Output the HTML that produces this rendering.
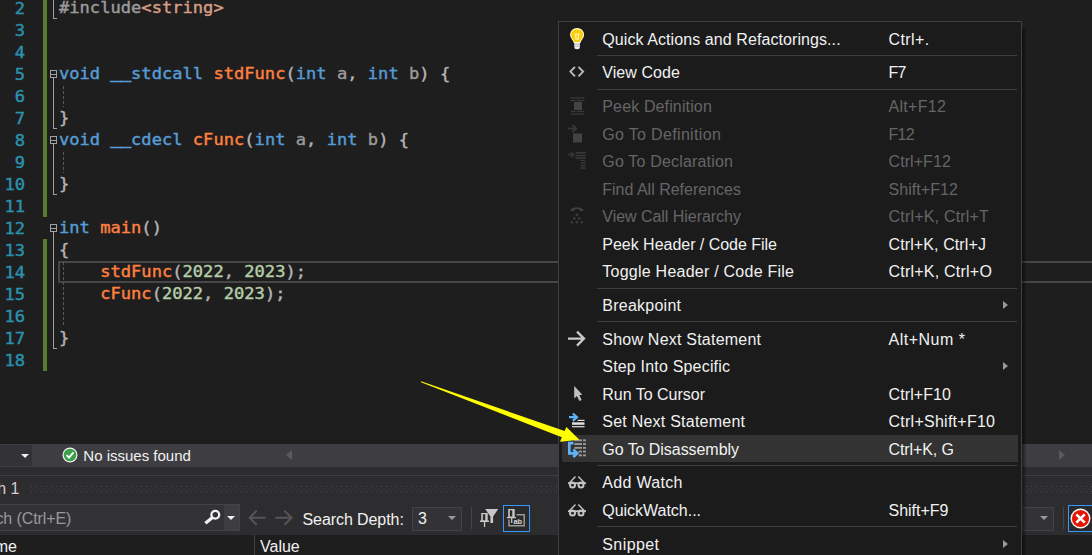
<!DOCTYPE html>
<html><head><meta charset="utf-8"><title>VS</title>
<style>
html,body{margin:0;padding:0;}
body{width:1092px;height:555px;overflow:hidden;background:#1e1e1e;position:relative;font-family:"Liberation Sans",sans-serif;}
.abs{position:absolute;}
#editor{position:absolute;left:0;top:0;width:1092px;height:444px;background:#1e1e1e;overflow:hidden;}
.ln{transform:scaleY(0.885);transform-origin:0 17px;position:absolute;left:0;width:25px;text-align:right;font:17.1px/22px "DejaVu Sans Mono","Liberation Mono",monospace;color:#2b91af;height:22px;-webkit-text-stroke:0.45px #2b91af;}
.cl{transform:scaleY(0.92);transform-origin:0 17px;position:absolute;left:59px;font:17.1px/22px "DejaVu Sans Mono","Liberation Mono",monospace;color:#dcdcdc;height:22px;white-space:pre;-webkit-text-stroke-width:0.45px;}
.k{color:#569cd6}.f{color:#ff8040}.s{color:#d69d85}.p{color:#9b9b9b}.n{color:#b5cea8}.v{color:#9a9a9a}.d{color:#b4b4b4}
.us{position:relative;top:-1.2px;-webkit-text-stroke-width:1.1px;}
.gb{position:absolute;left:43px;width:4px;background:#577b2f;}
#menu{position:absolute;left:558px;top:21px;width:462px;height:560px;background:#1b1b1c;border:1px solid #3f3f44;box-shadow:3px 8px 2px rgba(0,0,0,0.4);}
#menu>*{position:absolute;}
#menu .mi{margin-left:-559px;margin-top:-22px;font:16px/20px "Liberation Sans",sans-serif;color:#f1f1f1;white-space:pre;height:20px;}
#menu .mi.dis{color:#656565;}
#menu .sep{left:38px;width:420px;height:1px;background:#3d3d40;margin-top:-22px;}
#menu .hl{left:3px;width:456px;height:27px;background:#333334;margin-top:-22px;}
#menu .sub{left:443.5px;width:0;height:0;border-left:5px solid #999;border-top:4.5px solid transparent;border-bottom:4.5px solid transparent;margin-top:-22px;}
#bottom{position:absolute;left:0;top:444px;width:1092px;height:111px;background:#2d2d30;overflow:hidden;}
#bottom .st{font:16px/20px "Liberation Sans",sans-serif;color:#f1f1f1;white-space:pre;}
.tri-d{width:0;height:0;border-top:4px solid #999;border-left:4px solid transparent;border-right:4px solid transparent;}
.grip{background-image:radial-gradient(circle at 1px 1px,#3f3f44 0.7px,transparent 1.1px),radial-gradient(circle at 1px 1px,#3f3f44 0.7px,transparent 1.1px);background-size:4px 4px,4px 4px;background-position:0 0,2px 2px;}
</style></head><body>
<div id="editor">
<div class="gb" style="top:0;height:217px"></div>
<div class="gb" style="top:239px;height:132px"></div>
<div class="ln" style="top:-2.7px">2</div>
<div class="ln" style="top:19.3px">3</div>
<div class="ln" style="top:41.3px">4</div>
<div class="ln" style="top:63.3px">5</div>
<div class="ln" style="top:85.3px">6</div>
<div class="ln" style="top:107.3px">7</div>
<div class="ln" style="top:129.3px">8</div>
<div class="ln" style="top:151.3px">9</div>
<div class="ln" style="top:173.3px">10</div>
<div class="ln" style="top:195.3px">11</div>
<div class="ln" style="top:217.3px">12</div>
<div class="ln" style="top:239.3px">13</div>
<div class="ln" style="top:261.3px">14</div>
<div class="ln" style="top:283.3px">15</div>
<div class="ln" style="top:305.3px">16</div>
<div class="ln" style="top:327.3px">17</div>
<div class="ln" style="top:349.3px">18</div>
<div class="abs" style="left:58px;top:261px;width:1040px;height:18px;border:2px solid #464646;"></div>
<div class="cl" style="top:-4.45px"><span class="p">#include</span><span class="s">&lt;string&gt;</span></div>
<div class="cl" style="top:61.55px"><span class="k">void</span> <span class="k"><span class="us">__</span>stdcall</span> <span class="f">stdFunc</span><span class="d">(</span><span class="k">int</span> <span class="v">a</span><span class="d">,</span> <span class="k">int</span> <span class="v">b</span><span class="d">)</span> <span class="d">{</span></div>
<div class="cl" style="top:105.55px"><span class="d">}</span></div>
<div class="cl" style="top:127.55px"><span class="k">void</span> <span class="k"><span class="us">__</span>cdecl</span> <span class="f">cFunc</span><span class="d">(</span><span class="k">int</span> <span class="v">a</span><span class="d">,</span> <span class="k">int</span> <span class="v">b</span><span class="d">)</span> <span class="d">{</span></div>
<div class="cl" style="top:171.55px"><span class="d">}</span></div>
<div class="cl" style="top:215.55px"><span class="k">int</span> <span class="f">main</span><span class="d">()</span></div>
<div class="cl" style="top:237.55px"><span class="d">{</span></div>
<div class="cl" style="top:259.55px">    <span class="f">stdFunc</span><span class="d">(</span><span class="n">2022</span><span class="d">,</span> <span class="n">2023</span><span class="d">);</span></div>
<div class="cl" style="top:281.55px">    <span class="f">cFunc</span><span class="d">(</span><span class="n">2022</span><span class="d">,</span> <span class="n">2023</span><span class="d">);</span></div>
<div class="cl" style="top:325.55px"><span class="d">}</span></div>
<svg class="abs" style="left:0;top:0" width="120" height="444" viewBox="0 0 120 444" shape-rendering="crispEdges">
  <g stroke="#a0a0a0" stroke-width="1" fill="none">
    <!-- line 2 end of region -->
    <path d="M53.5 0 V18.5 H57"/>
    <!-- fold 5..7 -->
    <rect x="50.5" y="70.5" width="6" height="7" fill="#1e1e1e"/><path d="M51 74.5 H56"/>
    <path d="M53.5 78 V128.5 H57"/>
    <!-- fold 8..10 -->
    <rect x="50.5" y="136.5" width="6" height="7" fill="#1e1e1e"/><path d="M51 140.5 H56"/>
    <path d="M53.5 144 V194.5 H57"/>
    <!-- fold 12..17 -->
    <rect x="50.5" y="224.5" width="6" height="7" fill="#1e1e1e"/><path d="M51 228.5 H56"/>
    <path d="M53.5 232 V348.5 H57"/>
  </g>
  <g stroke="#5a5a5a" stroke-width="1" stroke-dasharray="3 2" fill="none">
    <path d="M63.5 86 V107"/>
    <path d="M63.5 152 V173"/>
    <path d="M63.5 262 V327"/>
  </g>
</svg>

</div>
<div id="bottom">
  <!-- status strip -->
  <div class="abs" style="left:0;top:0;width:1092px;height:23px;background:#3e3e42;"></div>
  <div class="abs" style="left:0;top:1px;width:32px;height:21px;background:#333337;"></div>
  <div class="abs tri-d" style="left:21px;top:10px;border-top-color:#f1f1f1;"></div>
  <svg class="abs" style="left:62px;top:3px" width="16" height="16" viewBox="0 0 17 17"><circle cx="8.5" cy="8.5" r="8" fill="#f5f5f5"/><circle cx="8.5" cy="8.5" r="6.7" fill="#3aa04a"/><path d="M4.8 8.7 L7.4 11.2 L12.2 5.6" fill="none" stroke="#fff" stroke-width="2"/></svg>
  <div class="abs st" style="left:83.3px;top:2px;font-size:15px;">No issues found</div>
  <div class="abs" style="left:286px;top:6px;width:0;height:0;border-right:6px solid #5a5a5e;border-top:5px solid transparent;border-bottom:5px solid transparent;"></div>
  <div class="abs" style="left:1059px;top:6px;width:0;height:0;border-left:6px solid #5a5a5e;border-top:5px solid transparent;border-bottom:5px solid transparent;"></div>
  <!-- gap + line -->
  <div class="abs" style="left:0;top:31px;width:1092px;height:1px;background:#3f3f46;"></div>
  <!-- title row -->
  <div class="abs st" style="left:-2.8px;top:35px;color:#d0d0d0;">h 1</div>
  <svg class="abs" style="left:31px;top:42px" width="1061" height="6"><defs><pattern id="gp" width="5" height="5" patternUnits="userSpaceOnUse"><rect x="0" y="0" width="1" height="1" fill="#48484d"/><rect x="2.5" y="2.6" width="1" height="1" fill="#404045"/></pattern></defs><rect width="1061" height="6" fill="url(#gp)"/></svg>
  <!-- search box -->
  <div class="abs" style="left:-5px;top:60px;width:243px;height:25px;background:#333337;border:1px solid #434346;"></div>
  <div class="abs" style="left:224px;top:61px;width:15px;height:25px;background:#3e3e42;"></div>
  <div class="abs st" style="left:-4.6px;top:65px;color:#999;letter-spacing:-0.1px">ch (Ctrl+E)</div>
  <svg class="abs" style="left:200px;top:60px" width="24" height="28" viewBox="0 0 24 28"><circle cx="15.3" cy="10.8" r="3.9" fill="none" stroke="#f1f1f1" stroke-width="2.3"/><path d="M12.5 13.4 L5.4 19.2" stroke="#f1f1f1" stroke-width="3.2" fill="none"/></svg>
  <div class="abs tri-d" style="left:227px;top:72px;border-top-color:#f1f1f1;"></div>
  <!-- nav arrows -->
  <svg class="abs" style="left:247px;top:60px" width="48" height="28" viewBox="0 0 48 28"><g fill="none" stroke="#555558" stroke-width="2"><path d="M18.7 13.8 H3 M9.8 6.6 L2.6 13.8 L9.8 21"/><path d="M28.2 13.8 H44 M37.4 6.6 L44.6 13.8 L37.4 21"/></g></svg>
  <div class="abs st" id="sd" style="left:302.5px;top:66px;letter-spacing:-0.08px;color:#f1f1f1;">Search Depth:</div>
  <div class="abs" style="left:412px;top:63px;width:48px;height:22px;background:#333337;border:1px solid #434346;"></div>
  <div class="abs st" style="left:418px;top:65px;color:#f1f1f1;">3</div>
  <div class="abs tri-d" style="left:448px;top:72px;border-top-color:#999;"></div>
  <div class="abs" style="left:471px;top:63px;width:1px;height:22px;background:#46464a;"></div>
  <div class="abs" style="left:503px;top:61px;width:25px;height:25px;border:1px solid #3399ff;background:#2a2a2c;"></div>
  <svg class="abs" style="left:478px;top:60px" width="52" height="30" viewBox="478 504 52 30">
    <g fill="#c8c8c8">
      <path d="M481.2 513 H487.7 V520.6 H489 V522 H485.2 V527 H483.9 V522 H480 V520.6 H481.2 Z M482.8 514.2 V520.2 H485.3 V514.2 Z" fill-rule="evenodd"/>
      <path d="M485.2 509.1 H498.2 L493.1 516.4 V523 H490.4 V516.4 Z"/>
      <path d="M508.2 509 H514.7 V516.9 H516 V518.3 H512.3 V523 H511.1 V518.3 H506.9 V516.9 H508.2 Z M509.8 510.2 V516.5 H512.3 V510.2 Z" fill-rule="evenodd"/>
    </g>
    <path d="M516.5 514.8 H524.2 V525.8 H509 V519.5" fill="none" stroke="#999" stroke-width="1.5"/>
    <text x="513.4" y="523.6" font-family="Liberation Sans, sans-serif" font-size="7.6" font-weight="bold" fill="#d8d8d8">ab</text>
  </svg>
  <!-- right side (behind/after menu) -->
  <div class="abs" style="left:1000px;top:63px;width:52px;height:22px;background:#333337;border:1px solid #434346;"></div>
  <div class="abs tri-d" style="left:1040px;top:72px;border-top-color:#999;"></div>
  <div class="abs" style="left:1063px;top:63px;width:1px;height:22px;background:#46464a;"></div>
  <div class="abs" style="left:1068px;top:61px;width:30px;height:25px;border:1px solid #3399ff;background:#2a2a2c;"></div>
  <svg class="abs" style="left:1070px;top:64px" width="21" height="21" viewBox="0 0 21 21"><circle cx="10.5" cy="10.5" r="10" fill="#f5f5f5"/><circle cx="10.5" cy="10.5" r="8.6" fill="#e51400"/><path d="M6.3 6.3 L14.7 14.7 M14.7 6.3 L6.3 14.7" stroke="#fff" stroke-width="2.6" fill="none"/></svg>
  <!-- grid header -->
  <div class="abs" style="left:0;top:91px;width:1092px;height:20px;background:#1e1e1e;"></div>
  <div class="abs" style="left:254px;top:91px;width:1px;height:20px;background:#3f3f46;"></div>
  <div class="abs st" style="left:-5.3px;top:93px;color:#f1f1f1;">me</div>
  <div class="abs st" style="left:260px;top:93px;color:#f1f1f1;">Value</div>
</div>

<div id="menu">
<div class="hl" style="top:435px"></div>
<div class="sep" style="top:55px"></div>
<div class="sep" style="top:89px"></div>
<div class="sep" style="top:288px"></div>
<div class="sep" style="top:321px"></div>
<div class="sep" style="top:465px"></div>
<div class="sep" style="top:526px"></div>
<div class="mi" style="left:602.3px;top:29.71px;letter-spacing:0.082px">Quick Actions and Refactorings...</div>
<div class="mi" style="left:888.5px;top:29.71px;letter-spacing:0.426px">Ctrl+.</div>
<div class="mi" style="left:602.3px;top:62.71px;letter-spacing:0.051px">View Code</div>
<div class="mi" style="left:888.5px;top:62.71px;letter-spacing:-0.700px">F7</div>
<div class="mi dis" style="left:602.3px;top:96.71px;letter-spacing:0.134px">Peek Definition</div>
<div class="mi dis" style="left:888.5px;top:96.71px;letter-spacing:0.284px">Alt+F12</div>
<div class="mi dis" style="left:602.3px;top:124.71px;letter-spacing:0.330px">Go To Definition</div>
<div class="mi dis" style="left:888.5px;top:124.71px;letter-spacing:-0.700px">F12</div>
<div class="mi dis" style="left:602.3px;top:151.71px;letter-spacing:0.176px">Go To Declaration</div>
<div class="mi dis" style="left:888.5px;top:151.71px;letter-spacing:0.072px">Ctrl+F12</div>
<div class="mi dis" style="left:602.3px;top:179.71px;letter-spacing:-0.007px">Find All References</div>
<div class="mi dis" style="left:888.5px;top:179.71px;letter-spacing:0.045px">Shift+F12</div>
<div class="mi dis" style="left:602.3px;top:206.71px;letter-spacing:-0.040px">View Call Hierarchy</div>
<div class="mi dis" style="left:888.5px;top:206.71px;letter-spacing:0.200px">Ctrl+K, Ctrl+T</div>
<div class="mi" style="left:602.3px;top:234.71px;letter-spacing:-0.023px">Peek Header / Code File</div>
<div class="mi" style="left:888.5px;top:234.71px;letter-spacing:0.106px">Ctrl+K, Ctrl+J</div>
<div class="mi" style="left:602.3px;top:261.71px;letter-spacing:0.242px">Toggle Header / Code File</div>
<div class="mi" style="left:888.5px;top:261.71px;letter-spacing:0.225px">Ctrl+K, Ctrl+O</div>
<div class="mi" style="left:602.3px;top:295.71px;letter-spacing:0.244px">Breakpoint</div>
<div class="sub" style="top:301.0px"></div>
<div class="mi" style="left:602.3px;top:329.71px;letter-spacing:0.219px">Show Next Statement</div>
<div class="mi" style="left:888.5px;top:329.71px;letter-spacing:0.504px">Alt+Num *</div>
<div class="mi" style="left:602.3px;top:356.71px;letter-spacing:0.187px">Step Into Specific</div>
<div class="sub" style="top:362.0px"></div>
<div class="mi" style="left:602.3px;top:384.71px;letter-spacing:-0.013px">Run To Cursor</div>
<div class="mi" style="left:888.5px;top:384.71px;letter-spacing:0.100px">Ctrl+F10</div>
<div class="mi" style="left:602.3px;top:411.71px;letter-spacing:0.233px">Set Next Statement</div>
<div class="mi" style="left:888.5px;top:411.71px;letter-spacing:0.257px">Ctrl+Shift+F10</div>
<div class="mi" style="left:602.3px;top:439.71px;letter-spacing:-0.052px">Go To Disassembly</div>
<div class="mi" style="left:888.5px;top:439.71px;letter-spacing:-0.092px">Ctrl+K, G</div>
<div class="mi" style="left:602.3px;top:472.71px;letter-spacing:0.316px">Add Watch</div>
<div class="mi" style="left:602.3px;top:500.71px;letter-spacing:-0.024px">QuickWatch...</div>
<div class="mi" style="left:888.5px;top:500.71px;letter-spacing:-0.004px">Shift+F9</div>
<div class="mi" style="left:602.3px;top:534.71px;letter-spacing:0.406px">Snippet</div>
<div class="sub" style="top:540.0px"></div>

</div>
<svg id="icons" class="abs" style="left:0;top:0" width="1092" height="555" viewBox="0 0 1092 555">
  <!-- lightbulb -->
  <g>
    <path d="M577.1 28.6 C573.2 28.6 570.6 31.5 570.6 34.8 C570.6 37.6 572.6 39.2 573.6 41 L574.3 42.6 H579.9 L580.6 41 C581.6 39.2 583.6 37.6 583.6 34.8 C583.6 31.5 581 28.6 577.1 28.6 Z" fill="#ffcc00" stroke="#fff6d0" stroke-width="1.1"/>
    <path d="M574.4 34.2 H579.8 M575.6 34.6 L576.2 40 M578.6 34.6 L578 40" fill="none" stroke="#fff3c0" stroke-width="1.3"/>
    <path d="M574.3 42.6 H579.9 V47 Q579.9 49.2 577.1 49.2 Q574.3 49.2 574.3 47 Z" fill="#f0f0f0"/>
    <path d="M574.3 44.3 H579.9 M574.3 46.3 H579.9" stroke="#a8a8a8" stroke-width="0.8"/>
  </g>
  <!-- view code <> -->
  <path d="M575 66.9 L570.4 71.6 L575 76.3 M578.5 66.9 L583.1 71.6 L578.5 76.3" fill="none" stroke="#bcbcbc" stroke-width="1.9"/>
  <!-- peek definition (disabled) -->
  <g fill="#3a3a3a">
    <rect x="570.5" y="97.2" width="14" height="1.3"/>
    <rect x="570.5" y="99.9" width="5" height="1.2"/><rect x="576.8" y="99.9" width="7.7" height="1.2"/>
    <rect x="574" y="102" width="8" height="8" fill="#434343"/>
    <rect x="570.5" y="110.9" width="5" height="1.2"/><rect x="576.8" y="110.9" width="7.7" height="1.2"/>
    <rect x="570.5" y="113.5" width="14" height="1.3"/>
  </g>
  <!-- go to definition (disabled) -->
  <path d="M568 128.5 H575.4 M572.4 124.8 L576.2 128.5 L572.4 132.2" fill="none" stroke="#363636" stroke-width="2"/>
  <rect x="573" y="133.5" width="9" height="9" fill="#434343"/>
  <!-- go to declaration (disabled) -->
  <path d="M568 154.7 H573.4 M571 152 L573.9 154.7 L571 157.4" fill="none" stroke="#343434" stroke-width="1.7"/>
  <g fill="#3a3a3a">
    <rect x="575.5" y="152" width="10.1" height="1.6"/><rect x="575.5" y="154.8" width="10.1" height="1.4"/><rect x="575.5" y="157.2" width="10.1" height="1.6"/>
    <rect x="580.5" y="159.8" width="5.1" height="1.3"/><rect x="580.5" y="162.3" width="5.1" height="1.4"/><rect x="580.5" y="164.9" width="5.1" height="1.3"/><rect x="580.5" y="167.3" width="5.1" height="1.5"/>
  </g>
  <!-- view call hierarchy (disabled) -->
  <g fill="#404040">
    <path d="M570.8 211 V209 Q577 205.3 583.2 209 V211 H579.6 V209.6 Q577 208.6 574.4 209.6 V211 Z"/>
    <rect x="575.7" y="213.6" width="2.2" height="2.2"/>
    <rect x="573.2" y="217.4" width="2.2" height="2.2"/><rect x="578.2" y="217.4" width="2.2" height="2.2"/>
    <rect x="570.7" y="221.2" width="2.2" height="2.2"/><rect x="575.7" y="221.2" width="2.2" height="2.2"/><rect x="580.7" y="221.2" width="2.2" height="2.2"/>
  </g>
  <!-- show next statement arrow -->
  <path d="M568 338.6 H583.6 M577 331.6 L584 338.6 L577 345.6" fill="none" stroke="#c8c8c8" stroke-width="2.3"/>
  <!-- run to cursor -->
  <path d="M574.2 386 V398.5 L577 395.9 L579.3 400.9 L581.6 399.9 L579.3 395.1 L582.4 394.7 Z" fill="#c0c0c0"/>
  <!-- set next statement -->
  <path d="M569 417.2 H576.6 M572.8 413.5 L577 417.2 L572.8 420.9" fill="none" stroke="#62b2f6" stroke-width="2.2"/>
  <g fill="#e0e0e0"><rect x="577.5" y="419.8" width="7" height="1.2"/><rect x="572" y="422.3" width="12.5" height="2.5"/><rect x="572" y="426.1" width="12.5" height="1.2"/></g>
  <!-- go to disassembly -->
  <g fill="#9a9a9a">
    <rect x="574.4" y="439.4" width="7.6" height="1.9"/><rect x="583" y="439.4" width="2.9" height="1.9"/>
    <rect x="574.4" y="443.1" width="7.6" height="1.9"/><rect x="583" y="443.1" width="2.9" height="1.9"/>
    <rect x="574.4" y="446.9" width="7.6" height="1.9"/><rect x="583" y="446.9" width="2.9" height="1.9"/>
    <rect x="578.7" y="450.6" width="3.3" height="1.9"/><rect x="583" y="450.6" width="2.9" height="1.9"/>
    <rect x="578.7" y="454.4" width="3.3" height="1.9"/><rect x="583" y="454.4" width="2.9" height="1.9"/>
  </g>
  <path d="M573.5 443.1 H569.3 V453.3 H576.5 M573.3 449.6 L577.2 453.3 L573.3 457" fill="none" stroke="#62b2f6" stroke-width="2.7"/>
  <!-- glasses x2 -->
  <g id="gl" fill="none" stroke="#c4c4c4">
    <circle cx="572.5" cy="484.9" r="2.5" stroke-width="2"/><circle cx="581" cy="484.9" r="2.5" stroke-width="2"/>
    <path d="M568 483.2 H586" stroke-width="1.8"/>
    <path d="M569.2 483 L575.5 476.5 M584.6 483 L578.3 476.5" stroke-width="1.4"/>
  </g>
  <use href="#gl" y="28"/>
  <!-- yellow annotation arrow -->
  <path d="M421 381.3 L564.6 431 L566.4 427 L579.4 439.8 L560 441.8 L561.8 437.3 L421 382.2 Z" fill="#ffff00"/>
</svg>

</body></html>
